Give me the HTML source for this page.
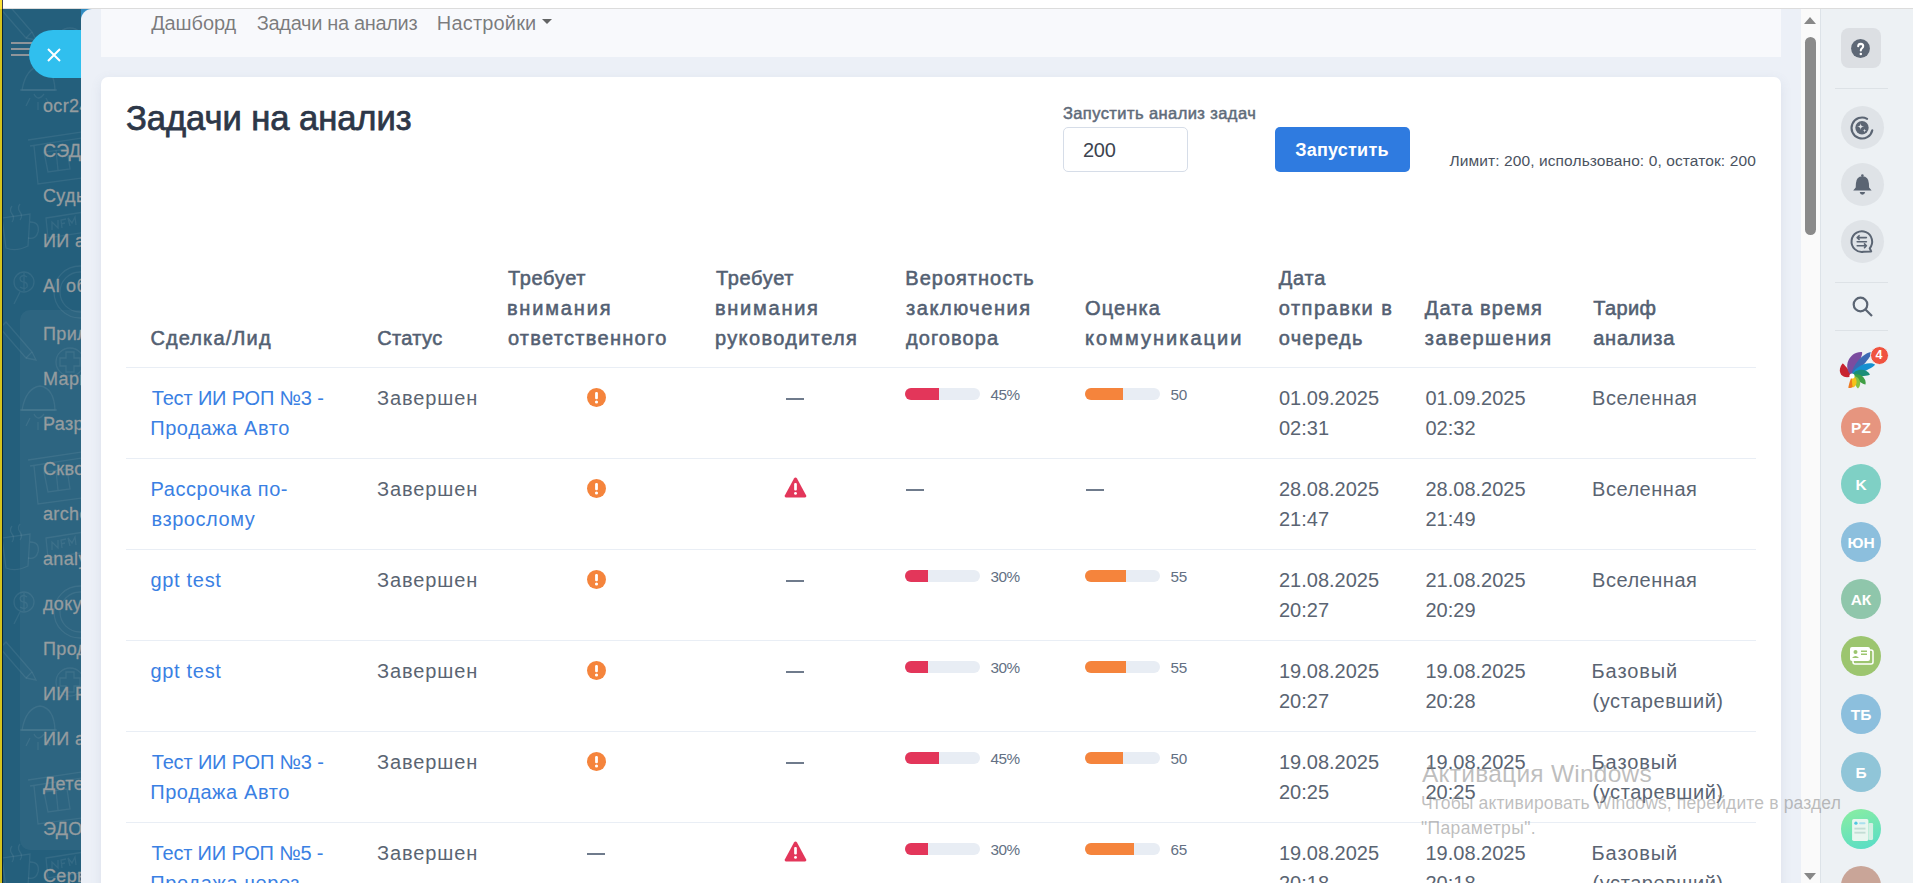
<!DOCTYPE html>
    <html><head><meta charset="utf-8"><title>Задачи на анализ</title><style>
    html,body{margin:0;padding:0}
    body{width:1913px;height:883px;overflow:hidden;position:relative;background:#fff;font-family:"Liberation Sans", sans-serif}
    .t{position:absolute;white-space:nowrap}
    #topline{position:absolute;left:3px;top:8px;width:1910px;height:1px;background:#dcdcdc}
    #ystrip{position:absolute;left:0;top:0;width:2px;height:883px;background:linear-gradient(#fde236 0,#fde236 9px,#d4c31f 9px)}
    #ystrip2{position:absolute;left:2px;top:0;width:1px;height:883px;background:linear-gradient(#44444f 0,#44444f 9px,#0c2432 9px)}
    #side{position:absolute;left:3px;top:9px;width:78px;height:874px;background:#245f7c;overflow:hidden}
    #side .t{margin-left:-3px;margin-top:-9px}
    .pat{position:absolute;left:0;top:0}
    .sbox{position:absolute;left:17px;top:301px;width:100px;height:540px;background:rgba(255,255,255,0.045);border-radius:10px}
    .hb{position:absolute;left:8px;width:22px;height:2.2px;background:#8f959a;margin-top:-9px}
    #pill{position:absolute;left:25.5px;top:21px;width:90px;height:48px;border-radius:24px;background:#30bfee}
    #panel{position:absolute;left:81px;top:9px;width:1720px;height:874px;background:#ecf0f7;border-top-left-radius:11px;overflow:hidden}
    #panel .t, #panel > div[style]{margin-left:-81px;margin-top:-9px}
    #nav{position:absolute;left:20px;top:0;width:1680px;height:48px;background:#f8f9fc}
    #card{position:absolute;left:20px;top:68px;width:1680px;height:900px;background:#fff;border-radius:7px;box-shadow:0 3px 12px rgba(90,110,150,0.11)}
    #inp{position:absolute;left:1063px;top:127px;width:123px;height:43px;border:1px solid #d6dde8;border-radius:5px;background:#fff}
    #btn{position:absolute;left:1275px;top:127px;width:135px;height:45px;border-radius:5px;background:#2f7be0}
    .hl{position:absolute;left:126px;width:1630px;height:1px;background:#e9eef5}
    .ic{position:absolute}
    .dash{position:absolute;height:1.6px;background:#6f7b8c}
    .bar{position:absolute;width:75px;height:12px;border-radius:6px;background:#e8edf4;overflow:hidden}
    .bar div{height:12px}
    #sb{position:absolute;left:1801px;top:9px;width:19px;height:874px;background:#fafafa}
    .arr{position:absolute;left:3px;width:0;height:0;border-left:6.6px solid transparent;border-right:6.6px solid transparent}
    .up{top:8px;border-bottom:7px solid #888}
    .dn{top:864px;border-top:7.2px solid #888}
    .thumb{position:absolute;left:4px;top:28px;width:11px;height:198px;border-radius:5.5px;background:#8a8a8a}
    #rb{position:absolute;left:1820px;top:9px;width:93px;height:874px;background:#edf1f4;border-left:1px solid #dde3e8;box-sizing:border-box;overflow:hidden}
    #rb > *{margin-top:-9px}
    .qbox{position:absolute;left:20px;top:28px;width:40px;height:40px;border-radius:8px;background:#dcdfe3}
    .rdiv{position:absolute;left:14px;width:53px;height:1px;background:#dde2e6}
    .rc{position:absolute;left:19.5px;width:43px;height:43px;border-radius:50%;background:#dfe3e7}
    .av{position:absolute;left:20px;width:40px;height:40px;border-radius:50%;color:#fff;font-weight:700;font-size:15.5px;line-height:42px;text-align:center}
    .badge{position:absolute;left:48.5px;top:336.9px;width:17px;height:17px;border-radius:50%;background:#f0533f;color:#fff;font-weight:700;font-size:12.5px;line-height:17px;text-align:center;border:1.5px solid #edf1f4;box-sizing:content-box;margin:0 !important}
    </style></head>
    <body>
    <div id="topline"></div><div id="ystrip"></div><div id="ystrip2"></div>
    <div id="side"><div class="sbox"></div><svg class="pat" style="left:-3px;top:-9px" width="84" height="883" viewBox="0 0 84 883" fill="none" stroke="rgba(255,255,255,0.075)" stroke-width="1.3"><g transform="translate(0,-260)"><g><path d="M22 30 Q26 8 40 6 Q54 8 55 30 Z"/><path d="M20 30 L57 30"/><path d="M34 34 Q38 42 44 34"/><path d="M30 38 L26 46 M38 42 L38 50 M46 38 L50 46"/><path d="M28 80 L82 72 M30 86 L82 78"/><path d="M34 86 L38 124 L82 118"/><path d="M44 92 L48 112 L70 109 L67 89 Z"/><path d="M56 90 L58 110"/><path d="M2 158 L30 154 L28 186 Q16 192 6 188 Z"/><path d="M30 162 Q40 162 38 172 Q36 180 28 178"/><path d="M12 146 q-3 4 0 8 q3 4 0 8 M20 144 q-3 4 0 8 q3 4 0 8"/><path d="M46 158 L84 152 L86 172 L48 178 Z"/><path d="M52 170 L52 162 L58 168 L58 160 M62 168 L61 160 L66 159 M61 164 L65 163 M70 166 L68 158 L72 163 L75 157 L76 165"/><circle cx="24" cy="222" r="10"/><path d="M20 232 L14 244"/><path d="M27 217 Q22 214 20 218 Q20 222 24 222 Q28 223 27 227 Q25 230 20 227 M24 213 L24 231"/><circle cx="80" cy="232" r="26"/><circle cx="80" cy="232" r="20"/><path d="M6 262 L32 292 L26 298 L0 268 Z"/><path d="M32 292 L36 300 L26 298"/><circle cx="70" cy="302" r="14"/><path d="M66 292 L74 292 L74 298 L80 298 L80 306 L74 306 L74 312 L66 312 L66 306 L60 306 L60 298 L66 298 Z"/></g></g><g transform="translate(0,60)"><g><path d="M22 30 Q26 8 40 6 Q54 8 55 30 Z"/><path d="M20 30 L57 30"/><path d="M34 34 Q38 42 44 34"/><path d="M30 38 L26 46 M38 42 L38 50 M46 38 L50 46"/><path d="M28 80 L82 72 M30 86 L82 78"/><path d="M34 86 L38 124 L82 118"/><path d="M44 92 L48 112 L70 109 L67 89 Z"/><path d="M56 90 L58 110"/><path d="M2 158 L30 154 L28 186 Q16 192 6 188 Z"/><path d="M30 162 Q40 162 38 172 Q36 180 28 178"/><path d="M12 146 q-3 4 0 8 q3 4 0 8 M20 144 q-3 4 0 8 q3 4 0 8"/><path d="M46 158 L84 152 L86 172 L48 178 Z"/><path d="M52 170 L52 162 L58 168 L58 160 M62 168 L61 160 L66 159 M61 164 L65 163 M70 166 L68 158 L72 163 L75 157 L76 165"/><circle cx="24" cy="222" r="10"/><path d="M20 232 L14 244"/><path d="M27 217 Q22 214 20 218 Q20 222 24 222 Q28 223 27 227 Q25 230 20 227 M24 213 L24 231"/><circle cx="80" cy="232" r="26"/><circle cx="80" cy="232" r="20"/><path d="M6 262 L32 292 L26 298 L0 268 Z"/><path d="M32 292 L36 300 L26 298"/><circle cx="70" cy="302" r="14"/><path d="M66 292 L74 292 L74 298 L80 298 L80 306 L74 306 L74 312 L66 312 L66 306 L60 306 L60 298 L66 298 Z"/></g></g><g transform="translate(0,380)"><g><path d="M22 30 Q26 8 40 6 Q54 8 55 30 Z"/><path d="M20 30 L57 30"/><path d="M34 34 Q38 42 44 34"/><path d="M30 38 L26 46 M38 42 L38 50 M46 38 L50 46"/><path d="M28 80 L82 72 M30 86 L82 78"/><path d="M34 86 L38 124 L82 118"/><path d="M44 92 L48 112 L70 109 L67 89 Z"/><path d="M56 90 L58 110"/><path d="M2 158 L30 154 L28 186 Q16 192 6 188 Z"/><path d="M30 162 Q40 162 38 172 Q36 180 28 178"/><path d="M12 146 q-3 4 0 8 q3 4 0 8 M20 144 q-3 4 0 8 q3 4 0 8"/><path d="M46 158 L84 152 L86 172 L48 178 Z"/><path d="M52 170 L52 162 L58 168 L58 160 M62 168 L61 160 L66 159 M61 164 L65 163 M70 166 L68 158 L72 163 L75 157 L76 165"/><circle cx="24" cy="222" r="10"/><path d="M20 232 L14 244"/><path d="M27 217 Q22 214 20 218 Q20 222 24 222 Q28 223 27 227 Q25 230 20 227 M24 213 L24 231"/><circle cx="80" cy="232" r="26"/><circle cx="80" cy="232" r="20"/><path d="M6 262 L32 292 L26 298 L0 268 Z"/><path d="M32 292 L36 300 L26 298"/><circle cx="70" cy="302" r="14"/><path d="M66 292 L74 292 L74 298 L80 298 L80 306 L74 306 L74 312 L66 312 L66 306 L60 306 L60 298 L66 298 Z"/></g></g><g transform="translate(0,700)"><g><path d="M22 30 Q26 8 40 6 Q54 8 55 30 Z"/><path d="M20 30 L57 30"/><path d="M34 34 Q38 42 44 34"/><path d="M30 38 L26 46 M38 42 L38 50 M46 38 L50 46"/><path d="M28 80 L82 72 M30 86 L82 78"/><path d="M34 86 L38 124 L82 118"/><path d="M44 92 L48 112 L70 109 L67 89 Z"/><path d="M56 90 L58 110"/><path d="M2 158 L30 154 L28 186 Q16 192 6 188 Z"/><path d="M30 162 Q40 162 38 172 Q36 180 28 178"/><path d="M12 146 q-3 4 0 8 q3 4 0 8 M20 144 q-3 4 0 8 q3 4 0 8"/><path d="M46 158 L84 152 L86 172 L48 178 Z"/><path d="M52 170 L52 162 L58 168 L58 160 M62 168 L61 160 L66 159 M61 164 L65 163 M70 166 L68 158 L72 163 L75 157 L76 165"/><circle cx="24" cy="222" r="10"/><path d="M20 232 L14 244"/><path d="M27 217 Q22 214 20 218 Q20 222 24 222 Q28 223 27 227 Q25 230 20 227 M24 213 L24 231"/><circle cx="80" cy="232" r="26"/><circle cx="80" cy="232" r="20"/><path d="M6 262 L32 292 L26 298 L0 268 Z"/><path d="M32 292 L36 300 L26 298"/><circle cx="70" cy="302" r="14"/><path d="M66 292 L74 292 L74 298 L80 298 L80 306 L74 306 L74 312 L66 312 L66 306 L60 306 L60 298 L66 298 Z"/></g></g></svg><div class="hb" style="top:42px"></div><div class="hb" style="top:48px"></div><div class="hb" style="top:54px"></div><div class="t" style="left:43.00px;top:97.36px;font-size:18px;line-height:18px;color:#959c9f;font-weight:400;letter-spacing:0.350px;-webkit-text-stroke:0.3px #959c9f;">ocr24</div><div class="t" style="left:43.00px;top:142.16px;font-size:18px;line-height:18px;color:#959c9f;font-weight:400;letter-spacing:0.350px;-webkit-text-stroke:0.3px #959c9f;">СЭД</div><div class="t" style="left:43.00px;top:186.76px;font-size:18px;line-height:18px;color:#959c9f;font-weight:400;letter-spacing:0.350px;-webkit-text-stroke:0.3px #959c9f;">Судьи</div><div class="t" style="left:43.00px;top:232.36px;font-size:18px;line-height:18px;color:#959c9f;font-weight:400;letter-spacing:0.350px;-webkit-text-stroke:0.3px #959c9f;">ИИ ана</div><div class="t" style="left:43.00px;top:277.16px;font-size:18px;line-height:18px;color:#959c9f;font-weight:400;letter-spacing:0.350px;-webkit-text-stroke:0.3px #959c9f;">AI обз</div><div class="t" style="left:43.00px;top:324.76px;font-size:18px;line-height:18px;color:#959c9f;font-weight:400;letter-spacing:0.350px;-webkit-text-stroke:0.3px #959c9f;">Прил</div><div class="t" style="left:43.00px;top:369.76px;font-size:18px;line-height:18px;color:#959c9f;font-weight:400;letter-spacing:0.350px;-webkit-text-stroke:0.3px #959c9f;">Марк</div><div class="t" style="left:43.00px;top:414.76px;font-size:18px;line-height:18px;color:#959c9f;font-weight:400;letter-spacing:0.350px;-webkit-text-stroke:0.3px #959c9f;">Разраб</div><div class="t" style="left:43.00px;top:459.76px;font-size:18px;line-height:18px;color:#959c9f;font-weight:400;letter-spacing:0.350px;-webkit-text-stroke:0.3px #959c9f;">Сквоз</div><div class="t" style="left:43.00px;top:504.76px;font-size:18px;line-height:18px;color:#959c9f;font-weight:400;letter-spacing:0.350px;-webkit-text-stroke:0.3px #959c9f;">archer</div><div class="t" style="left:43.00px;top:549.76px;font-size:18px;line-height:18px;color:#959c9f;font-weight:400;letter-spacing:0.350px;-webkit-text-stroke:0.3px #959c9f;">analyt</div><div class="t" style="left:43.00px;top:594.76px;font-size:18px;line-height:18px;color:#959c9f;font-weight:400;letter-spacing:0.350px;-webkit-text-stroke:0.3px #959c9f;">докум</div><div class="t" style="left:43.00px;top:639.76px;font-size:18px;line-height:18px;color:#959c9f;font-weight:400;letter-spacing:0.350px;-webkit-text-stroke:0.3px #959c9f;">Прод</div><div class="t" style="left:43.00px;top:684.76px;font-size:18px;line-height:18px;color:#959c9f;font-weight:400;letter-spacing:0.350px;-webkit-text-stroke:0.3px #959c9f;">ИИ РО</div><div class="t" style="left:43.00px;top:729.76px;font-size:18px;line-height:18px;color:#959c9f;font-weight:400;letter-spacing:0.350px;-webkit-text-stroke:0.3px #959c9f;">ИИ ана</div><div class="t" style="left:43.00px;top:774.76px;font-size:18px;line-height:18px;color:#959c9f;font-weight:400;letter-spacing:0.350px;-webkit-text-stroke:0.3px #959c9f;">Детек</div><div class="t" style="left:43.00px;top:819.76px;font-size:18px;line-height:18px;color:#959c9f;font-weight:400;letter-spacing:0.350px;-webkit-text-stroke:0.3px #959c9f;">ЭДО</div><div class="t" style="left:43.00px;top:867.26px;font-size:18px;line-height:18px;color:#959c9f;font-weight:400;letter-spacing:0.350px;-webkit-text-stroke:0.3px #959c9f;">Серви</div><div id="pill"><svg width="14" height="14" viewBox="0 0 14 14" style="position:absolute;left:18.5px;top:17.5px"><path d="M1 1 L13 13 M13 1 L1 13" stroke="#fff" stroke-width="2"/></svg></div></div><div style="position:absolute;left:81px;top:9px;width:14px;height:14px;background:linear-gradient(135deg,#2e86bd,#46a9d9)"></div><div id="panel"><div id="nav"></div><div class="t" style="left:151.20px;top:13.07px;font-size:20px;line-height:20px;color:rgba(0,0,0,0.52);font-weight:400;letter-spacing:-0.117px;">Дашборд</div><div class="t" style="left:256.80px;top:13.07px;font-size:20px;line-height:20px;color:rgba(0,0,0,0.52);font-weight:400;letter-spacing:-0.327px;">Задачи на анализ</div><div class="t" style="left:436.80px;top:13.07px;font-size:20px;line-height:20px;color:rgba(0,0,0,0.52);font-weight:400;letter-spacing:0.175px;">Настройки</div><div style="position:absolute;left:541.5px;top:19px;width:0;height:0;border-left:5.8px solid transparent;border-right:5.8px solid transparent;border-top:5.8px solid rgba(0,0,0,0.6)"></div><div id="card"></div></div><div class="t" style="left:126.00px;top:101.46px;font-size:34.6px;line-height:34.6px;color:#2d3748;font-weight:400;letter-spacing:-0.067px;-webkit-text-stroke:0.75px #2d3748;">Задачи на анализ</div><div class="t" style="left:1062.90px;top:105.43px;font-size:16.5px;line-height:16.5px;color:#5f6b7a;font-weight:400;letter-spacing:0.414px;-webkit-text-stroke:0.5px #5f6b7a;">Запустить анализ задач</div><div id="inp"></div><div class="t" style="left:1083.00px;top:140.17px;font-size:20px;line-height:20px;color:#3d4450;font-weight:400;letter-spacing:-0.250px;">200</div><div id="btn"></div><div class="t" style="left:1295.30px;top:141.26px;font-size:18px;line-height:18px;color:#ffffff;font-weight:700;letter-spacing:0.213px;">Запустить</div><div class="t" style="left:1449.40px;top:152.88px;font-size:15.5px;line-height:15.5px;color:#4a5260;font-weight:400;letter-spacing:0.105px;">Лимит: 200, использовано: 0, остаток: 200</div><div class="t" style="left:150.40px;top:327.57px;font-size:20px;line-height:20px;color:#536072;font-weight:400;letter-spacing:1.122px;-webkit-text-stroke:0.55px #536072;">Сделка/Лид</div><div class="t" style="left:377.20px;top:327.57px;font-size:20px;line-height:20px;color:#536072;font-weight:400;letter-spacing:0.360px;-webkit-text-stroke:0.55px #536072;">Статус</div><div class="t" style="left:507.90px;top:267.57px;font-size:20px;line-height:20px;color:#536072;font-weight:400;letter-spacing:0.683px;-webkit-text-stroke:0.55px #536072;">Требует</div><div class="t" style="left:506.90px;top:297.57px;font-size:20px;line-height:20px;color:#536072;font-weight:400;letter-spacing:1.843px;-webkit-text-stroke:0.55px #536072;">внимания</div><div class="t" style="left:507.90px;top:327.57px;font-size:20px;line-height:20px;color:#536072;font-weight:400;letter-spacing:1.300px;-webkit-text-stroke:0.55px #536072;">ответственного</div><div class="t" style="left:715.90px;top:267.57px;font-size:20px;line-height:20px;color:#536072;font-weight:400;letter-spacing:0.683px;-webkit-text-stroke:0.55px #536072;">Требует</div><div class="t" style="left:714.90px;top:297.57px;font-size:20px;line-height:20px;color:#536072;font-weight:400;letter-spacing:1.757px;-webkit-text-stroke:0.55px #536072;">внимания</div><div class="t" style="left:714.90px;top:327.57px;font-size:20px;line-height:20px;color:#536072;font-weight:400;letter-spacing:1.382px;-webkit-text-stroke:0.55px #536072;">руководителя</div><div class="t" style="left:905.30px;top:267.57px;font-size:20px;line-height:20px;color:#536072;font-weight:400;letter-spacing:1.000px;-webkit-text-stroke:0.55px #536072;">Вероятность</div><div class="t" style="left:906.00px;top:297.57px;font-size:20px;line-height:20px;color:#536072;font-weight:400;letter-spacing:1.556px;-webkit-text-stroke:0.55px #536072;">заключения</div><div class="t" style="left:906.00px;top:327.57px;font-size:20px;line-height:20px;color:#536072;font-weight:400;letter-spacing:1.071px;-webkit-text-stroke:0.55px #536072;">договора</div><div class="t" style="left:1085.00px;top:297.57px;font-size:20px;line-height:20px;color:#536072;font-weight:400;letter-spacing:1.140px;-webkit-text-stroke:0.55px #536072;">Оценка</div><div class="t" style="left:1085.00px;top:327.57px;font-size:20px;line-height:20px;color:#536072;font-weight:400;letter-spacing:2.027px;-webkit-text-stroke:0.55px #536072;">коммуникации</div><div class="t" style="left:1278.80px;top:267.57px;font-size:20px;line-height:20px;color:#536072;font-weight:400;letter-spacing:0.733px;-webkit-text-stroke:0.55px #536072;">Дата</div><div class="t" style="left:1278.80px;top:297.57px;font-size:20px;line-height:20px;color:#536072;font-weight:400;letter-spacing:1.489px;-webkit-text-stroke:0.55px #536072;">отправки в</div><div class="t" style="left:1278.80px;top:327.57px;font-size:20px;line-height:20px;color:#536072;font-weight:400;letter-spacing:1.233px;-webkit-text-stroke:0.55px #536072;">очередь</div><div class="t" style="left:1424.80px;top:297.57px;font-size:20px;line-height:20px;color:#536072;font-weight:400;letter-spacing:1.078px;-webkit-text-stroke:0.55px #536072;">Дата время</div><div class="t" style="left:1424.80px;top:327.57px;font-size:20px;line-height:20px;color:#536072;font-weight:400;letter-spacing:1.467px;-webkit-text-stroke:0.55px #536072;">завершения</div><div class="t" style="left:1593.20px;top:297.57px;font-size:20px;line-height:20px;color:#536072;font-weight:400;letter-spacing:0.375px;-webkit-text-stroke:0.55px #536072;">Тариф</div><div class="t" style="left:1593.20px;top:327.57px;font-size:20px;line-height:20px;color:#536072;font-weight:400;letter-spacing:0.800px;-webkit-text-stroke:0.55px #536072;">анализа</div><div class="hl" style="top:367px"></div><div class="t" style="left:151.70px;top:387.77px;font-size:20px;line-height:20px;color:#3a80e3;font-weight:400;letter-spacing:-0.147px;">Тест ИИ РОП №3 -</div><div class="t" style="left:150.20px;top:417.77px;font-size:20px;line-height:20px;color:#3a80e3;font-weight:400;letter-spacing:0.591px;">Продажа Авто</div><div class="t" style="left:377.00px;top:387.77px;font-size:20px;line-height:20px;color:#5a6472;font-weight:400;letter-spacing:0.900px;">Завершен</div><svg class="ic" style="left:586.5px;top:387.5px" width="19" height="19" viewBox="0 0 19 19"><circle cx="9.5" cy="9.5" r="9.5" fill="#f5843c"/><rect x="8.1" y="4" width="2.8" height="7.2" rx="1.2" fill="#fff"/><circle cx="9.5" cy="14" r="1.55" fill="#fff"/></svg><div class="dash" style="left:786px;top:398.25px;width:18px"></div><div class="bar" style="left:905px;top:387.8px"><div style="width:33.8px;background:#e3365a"></div></div><div class="t" style="left:990.50px;top:387.15px;font-size:15.3px;line-height:15.3px;color:#637083;font-weight:400;letter-spacing:-0.450px;">45%</div><div class="bar" style="left:1085px;top:387.8px"><div style="width:37.5px;background:#f5843c"></div></div><div class="t" style="left:1170.50px;top:387.15px;font-size:15.3px;line-height:15.3px;color:#637083;font-weight:400;letter-spacing:-0.200px;">50</div><div class="t" style="left:1279.00px;top:387.77px;font-size:20px;line-height:20px;color:#5a6472;font-weight:400;letter-spacing:0.000px;">01.09.2025</div><div class="t" style="left:1279.00px;top:417.77px;font-size:20px;line-height:20px;color:#5a6472;font-weight:400;letter-spacing:0.000px;">02:31</div><div class="t" style="left:1425.50px;top:387.77px;font-size:20px;line-height:20px;color:#5a6472;font-weight:400;letter-spacing:0.000px;">01.09.2025</div><div class="t" style="left:1425.50px;top:417.77px;font-size:20px;line-height:20px;color:#5a6472;font-weight:400;letter-spacing:0.000px;">02:32</div><div class="t" style="left:1592.00px;top:387.77px;font-size:20px;line-height:20px;color:#5a6472;font-weight:400;letter-spacing:0.537px;">Вселенная</div><div class="hl" style="top:458px"></div><div class="t" style="left:150.50px;top:478.77px;font-size:20px;line-height:20px;color:#3a80e3;font-weight:400;letter-spacing:0.542px;">Рассрочка по-</div><div class="t" style="left:151.50px;top:508.77px;font-size:20px;line-height:20px;color:#3a80e3;font-weight:400;letter-spacing:0.550px;">взрослому</div><div class="t" style="left:377.00px;top:478.77px;font-size:20px;line-height:20px;color:#5a6472;font-weight:400;letter-spacing:0.900px;">Завершен</div><svg class="ic" style="left:586.5px;top:478.5px" width="19" height="19" viewBox="0 0 19 19"><circle cx="9.5" cy="9.5" r="9.5" fill="#f5843c"/><rect x="8.1" y="4" width="2.8" height="7.2" rx="1.2" fill="#fff"/><circle cx="9.5" cy="14" r="1.55" fill="#fff"/></svg><svg class="ic" style="left:783.9px;top:477.0px" width="23" height="21" viewBox="0 0 23 21"><path d="M11.5 0.6 Q12.4 0.6 13 1.6 L22.2 18.4 Q22.8 20.4 20.9 20.4 L2.1 20.4 Q0.2 20.4 0.8 18.4 L10 1.6 Q10.6 0.6 11.5 0.6 Z" fill="#e3365a"/><rect x="10.15" y="6" width="2.7" height="7.6" rx="1.1" fill="#fff"/><circle cx="11.5" cy="16.4" r="1.45" fill="#fff"/></svg><div class="dash" style="left:906.3px;top:489.25px;width:18px"></div><div class="dash" style="left:1086px;top:489.25px;width:18px"></div><div class="t" style="left:1279.00px;top:478.77px;font-size:20px;line-height:20px;color:#5a6472;font-weight:400;letter-spacing:0.000px;">28.08.2025</div><div class="t" style="left:1279.00px;top:508.77px;font-size:20px;line-height:20px;color:#5a6472;font-weight:400;letter-spacing:0.000px;">21:47</div><div class="t" style="left:1425.50px;top:478.77px;font-size:20px;line-height:20px;color:#5a6472;font-weight:400;letter-spacing:0.000px;">28.08.2025</div><div class="t" style="left:1425.50px;top:508.77px;font-size:20px;line-height:20px;color:#5a6472;font-weight:400;letter-spacing:0.000px;">21:49</div><div class="t" style="left:1592.00px;top:478.77px;font-size:20px;line-height:20px;color:#5a6472;font-weight:400;letter-spacing:0.537px;">Вселенная</div><div class="hl" style="top:549px"></div><div class="t" style="left:150.50px;top:569.77px;font-size:20px;line-height:20px;color:#3a80e3;font-weight:400;letter-spacing:0.686px;">gpt test</div><div class="t" style="left:377.00px;top:569.77px;font-size:20px;line-height:20px;color:#5a6472;font-weight:400;letter-spacing:0.900px;">Завершен</div><svg class="ic" style="left:586.5px;top:569.5px" width="19" height="19" viewBox="0 0 19 19"><circle cx="9.5" cy="9.5" r="9.5" fill="#f5843c"/><rect x="8.1" y="4" width="2.8" height="7.2" rx="1.2" fill="#fff"/><circle cx="9.5" cy="14" r="1.55" fill="#fff"/></svg><div class="dash" style="left:786px;top:580.25px;width:18px"></div><div class="bar" style="left:905px;top:569.8px"><div style="width:22.5px;background:#e3365a"></div></div><div class="t" style="left:990.50px;top:569.15px;font-size:15.3px;line-height:15.3px;color:#637083;font-weight:400;letter-spacing:-0.450px;">30%</div><div class="bar" style="left:1085px;top:569.8px"><div style="width:41.2px;background:#f5843c"></div></div><div class="t" style="left:1170.50px;top:569.15px;font-size:15.3px;line-height:15.3px;color:#637083;font-weight:400;letter-spacing:-0.200px;">55</div><div class="t" style="left:1279.00px;top:569.77px;font-size:20px;line-height:20px;color:#5a6472;font-weight:400;letter-spacing:0.000px;">21.08.2025</div><div class="t" style="left:1279.00px;top:599.77px;font-size:20px;line-height:20px;color:#5a6472;font-weight:400;letter-spacing:0.000px;">20:27</div><div class="t" style="left:1425.50px;top:569.77px;font-size:20px;line-height:20px;color:#5a6472;font-weight:400;letter-spacing:0.000px;">21.08.2025</div><div class="t" style="left:1425.50px;top:599.77px;font-size:20px;line-height:20px;color:#5a6472;font-weight:400;letter-spacing:0.000px;">20:29</div><div class="t" style="left:1592.00px;top:569.77px;font-size:20px;line-height:20px;color:#5a6472;font-weight:400;letter-spacing:0.537px;">Вселенная</div><div class="hl" style="top:640px"></div><div class="t" style="left:150.50px;top:660.77px;font-size:20px;line-height:20px;color:#3a80e3;font-weight:400;letter-spacing:0.686px;">gpt test</div><div class="t" style="left:377.00px;top:660.77px;font-size:20px;line-height:20px;color:#5a6472;font-weight:400;letter-spacing:0.900px;">Завершен</div><svg class="ic" style="left:586.5px;top:660.5px" width="19" height="19" viewBox="0 0 19 19"><circle cx="9.5" cy="9.5" r="9.5" fill="#f5843c"/><rect x="8.1" y="4" width="2.8" height="7.2" rx="1.2" fill="#fff"/><circle cx="9.5" cy="14" r="1.55" fill="#fff"/></svg><div class="dash" style="left:786px;top:671.25px;width:18px"></div><div class="bar" style="left:905px;top:660.8px"><div style="width:22.5px;background:#e3365a"></div></div><div class="t" style="left:990.50px;top:660.15px;font-size:15.3px;line-height:15.3px;color:#637083;font-weight:400;letter-spacing:-0.450px;">30%</div><div class="bar" style="left:1085px;top:660.8px"><div style="width:41.2px;background:#f5843c"></div></div><div class="t" style="left:1170.50px;top:660.15px;font-size:15.3px;line-height:15.3px;color:#637083;font-weight:400;letter-spacing:-0.200px;">55</div><div class="t" style="left:1279.00px;top:660.77px;font-size:20px;line-height:20px;color:#5a6472;font-weight:400;letter-spacing:0.000px;">19.08.2025</div><div class="t" style="left:1279.00px;top:690.77px;font-size:20px;line-height:20px;color:#5a6472;font-weight:400;letter-spacing:0.000px;">20:27</div><div class="t" style="left:1425.50px;top:660.77px;font-size:20px;line-height:20px;color:#5a6472;font-weight:400;letter-spacing:0.000px;">19.08.2025</div><div class="t" style="left:1425.50px;top:690.77px;font-size:20px;line-height:20px;color:#5a6472;font-weight:400;letter-spacing:0.000px;">20:28</div><div class="t" style="left:1591.60px;top:660.77px;font-size:20px;line-height:20px;color:#5a6472;font-weight:400;letter-spacing:0.900px;">Базовый</div><div class="t" style="left:1592.60px;top:690.77px;font-size:20px;line-height:20px;color:#5a6472;font-weight:400;letter-spacing:0.545px;">(устаревший)</div><div class="hl" style="top:731px"></div><div class="t" style="left:151.70px;top:751.77px;font-size:20px;line-height:20px;color:#3a80e3;font-weight:400;letter-spacing:-0.147px;">Тест ИИ РОП №3 -</div><div class="t" style="left:150.20px;top:781.77px;font-size:20px;line-height:20px;color:#3a80e3;font-weight:400;letter-spacing:0.591px;">Продажа Авто</div><div class="t" style="left:377.00px;top:751.77px;font-size:20px;line-height:20px;color:#5a6472;font-weight:400;letter-spacing:0.900px;">Завершен</div><svg class="ic" style="left:586.5px;top:751.5px" width="19" height="19" viewBox="0 0 19 19"><circle cx="9.5" cy="9.5" r="9.5" fill="#f5843c"/><rect x="8.1" y="4" width="2.8" height="7.2" rx="1.2" fill="#fff"/><circle cx="9.5" cy="14" r="1.55" fill="#fff"/></svg><div class="dash" style="left:786px;top:762.25px;width:18px"></div><div class="bar" style="left:905px;top:751.8px"><div style="width:33.8px;background:#e3365a"></div></div><div class="t" style="left:990.50px;top:751.15px;font-size:15.3px;line-height:15.3px;color:#637083;font-weight:400;letter-spacing:-0.450px;">45%</div><div class="bar" style="left:1085px;top:751.8px"><div style="width:37.5px;background:#f5843c"></div></div><div class="t" style="left:1170.50px;top:751.15px;font-size:15.3px;line-height:15.3px;color:#637083;font-weight:400;letter-spacing:-0.200px;">50</div><div class="t" style="left:1279.00px;top:751.77px;font-size:20px;line-height:20px;color:#5a6472;font-weight:400;letter-spacing:0.000px;">19.08.2025</div><div class="t" style="left:1279.00px;top:781.77px;font-size:20px;line-height:20px;color:#5a6472;font-weight:400;letter-spacing:0.000px;">20:25</div><div class="t" style="left:1425.50px;top:751.77px;font-size:20px;line-height:20px;color:#5a6472;font-weight:400;letter-spacing:0.000px;">19.08.2025</div><div class="t" style="left:1425.50px;top:781.77px;font-size:20px;line-height:20px;color:#5a6472;font-weight:400;letter-spacing:0.000px;">20:25</div><div class="t" style="left:1591.60px;top:751.77px;font-size:20px;line-height:20px;color:#5a6472;font-weight:400;letter-spacing:0.900px;">Базовый</div><div class="t" style="left:1592.60px;top:781.77px;font-size:20px;line-height:20px;color:#5a6472;font-weight:400;letter-spacing:0.545px;">(устаревший)</div><div class="hl" style="top:822px"></div><div class="t" style="left:151.50px;top:842.77px;font-size:20px;line-height:20px;color:#3a80e3;font-weight:400;letter-spacing:-0.167px;">Тест ИИ РОП №5 -</div><div class="t" style="left:150.20px;top:872.77px;font-size:20px;line-height:20px;color:#3a80e3;font-weight:400;letter-spacing:0.650px;">Продажа через</div><div class="t" style="left:377.00px;top:842.77px;font-size:20px;line-height:20px;color:#5a6472;font-weight:400;letter-spacing:0.900px;">Завершен</div><div class="dash" style="left:587px;top:853.25px;width:18px"></div><svg class="ic" style="left:783.9px;top:841.0px" width="23" height="21" viewBox="0 0 23 21"><path d="M11.5 0.6 Q12.4 0.6 13 1.6 L22.2 18.4 Q22.8 20.4 20.9 20.4 L2.1 20.4 Q0.2 20.4 0.8 18.4 L10 1.6 Q10.6 0.6 11.5 0.6 Z" fill="#e3365a"/><rect x="10.15" y="6" width="2.7" height="7.6" rx="1.1" fill="#fff"/><circle cx="11.5" cy="16.4" r="1.45" fill="#fff"/></svg><div class="bar" style="left:905px;top:842.8px"><div style="width:22.5px;background:#e3365a"></div></div><div class="t" style="left:990.50px;top:842.15px;font-size:15.3px;line-height:15.3px;color:#637083;font-weight:400;letter-spacing:-0.450px;">30%</div><div class="bar" style="left:1085px;top:842.8px"><div style="width:48.8px;background:#f5843c"></div></div><div class="t" style="left:1170.50px;top:842.15px;font-size:15.3px;line-height:15.3px;color:#637083;font-weight:400;letter-spacing:-0.200px;">65</div><div class="t" style="left:1279.00px;top:842.77px;font-size:20px;line-height:20px;color:#5a6472;font-weight:400;letter-spacing:0.000px;">19.08.2025</div><div class="t" style="left:1279.00px;top:872.77px;font-size:20px;line-height:20px;color:#5a6472;font-weight:400;letter-spacing:0.000px;">20:18</div><div class="t" style="left:1425.50px;top:842.77px;font-size:20px;line-height:20px;color:#5a6472;font-weight:400;letter-spacing:0.000px;">19.08.2025</div><div class="t" style="left:1425.50px;top:872.77px;font-size:20px;line-height:20px;color:#5a6472;font-weight:400;letter-spacing:0.000px;">20:18</div><div class="t" style="left:1591.60px;top:842.77px;font-size:20px;line-height:20px;color:#5a6472;font-weight:400;letter-spacing:0.900px;">Базовый</div><div class="t" style="left:1592.60px;top:872.77px;font-size:20px;line-height:20px;color:#5a6472;font-weight:400;letter-spacing:0.545px;">(устаревший)</div><div id="sb"><div class="arr up"></div><div class="thumb"></div><div class="arr dn"></div></div><div id="rb"><div class="qbox"><svg width="19" height="19" viewBox="0 0 19 19" style="position:absolute;left:10.4px;top:10.8px"><circle cx="9.5" cy="9.5" r="9.4" fill="#5e6876"/>
    <path d="M7.2 7.3 Q7.3 4.9 9.7 4.9 Q12.2 5 12.2 7.1 Q12.2 8.5 10.9 9.3 Q9.8 10 9.8 11.5" fill="none" stroke="#fff" stroke-width="2.1" stroke-linecap="round"/><circle cx="9.8" cy="15" r="1.25" fill="#fff"/></svg></div><div class="rdiv" style="top:88px"></div><div class="rc" style="top:106px"><svg width="43" height="43" viewBox="0 0 43 43" style="position:absolute;left:0;top:0"><path d="M26.1 12.8 A10.5 10.5 0 1 0 31.3 24.2" fill="none" stroke="#5b6573" stroke-width="2.1" stroke-linecap="round"/><circle cx="21" cy="21.8" r="6.7" fill="#5b6573"/><path d="M19.6 17.0 Q19.6 20.6 23.200000000000003 20.6 Q19.6 20.6 19.6 24.200000000000003 Q19.6 20.6 16.0 20.6 Q19.6 20.6 19.6 17.0Z" fill="#dfe3e7"/><path d="M23.6 22.700000000000003 Q23.6 24.6 25.5 24.6 Q23.6 24.6 23.6 26.5 Q23.6 24.6 21.700000000000003 24.6 Q23.6 24.6 23.6 22.700000000000003Z" fill="#dfe3e7"/></svg></div><div class="rc" style="top:163px"><svg width="43" height="43" viewBox="0 0 43 43" style="position:absolute;left:0;top:0" fill="#5b6573"><circle cx="21.4" cy="12.6" r="1.3"/><path d="M21.4 13.3 Q27.6 13.6 27.9 20.5 L28.1 24.4 L30.6 27.6 L12.2 27.6 L14.7 24.4 L14.9 20.5 Q15.2 13.6 21.4 13.3Z"/><path d="M18.7 29 L24.1 29 Q23.7 31.7 21.4 31.7 Q19.1 31.7 18.7 29Z"/></svg></div><div class="rc" style="top:220px"><svg width="43" height="43" viewBox="0 0 43 43" style="position:absolute;left:0;top:0" fill="none" stroke="#5b6573" stroke-width="2" stroke-linejoin="round" stroke-linecap="round"><path d="M22.6 31.8 A10.3 10.3 0 1 1 28.7 28.3 L30.2 31.4 Z"/><path d="M16.2 17.6 L25.4 17.6 M18.1 15.7 L16.2 17.6 L18.1 19.5 M16.2 21.7 L25.4 21.7 M16.2 25.8 L25.4 25.8 M23.5 23.9 L25.4 25.8 L23.5 27.7" stroke-width="1.6"/></svg></div><div class="rdiv" style="top:282px"></div><svg style="position:absolute;left:31px;top:296px" width="22" height="22" viewBox="0 0 22 22" fill="none" stroke="#5b6573" stroke-width="2.2"><circle cx="8.5" cy="8.5" r="6.8"/><path d="M13.5 13.5 L20 20"/></svg><div class="rdiv" style="top:329.5px"></div><svg style="position:absolute;left:15.5px;top:348.5px" width="50" height="44" viewBox="-15 -27 50 44"><path d="M0 0 C7.03 4.00 4.08 12.26 -3.50 12.00 C-4.04 11.19 -1.94 3.99 0 0Z" fill="#ee7a1e"/><path d="M0 0 C-9.86 4.54 -15.95 -4.64 -9.50 -12.50 C-8.12 -12.56 -2.42 -5.06 0 0Z" fill="#c8232f"/><path d="M0 0 C-10.38 -8.55 -2.59 -25.02 10.00 -24.00 C11.23 -22.08 5.23 -7.68 0 0Z" fill="#7b4c9f"/><path d="M0 0 C-2.40 -8.10 11.96 -24.60 20.00 -24.00 C20.73 -21.36 8.73 -6.96 0 0Z" fill="#3c69b3"/><path d="M0 0 C0.09 -8.45 16.41 -16.05 23.00 -11.50 C22.68 -9.27 8.88 -2.37 0 0Z" fill="#1590d0"/><path d="M0 0 C2.06 -7.92 14.70 -8.46 18.00 -1.50 C17.21 -0.13 6.41 0.77 0 0Z" fill="#1c8e77"/><path d="M0 0 C5.85 -4.80 15.04 1.55 13.50 8.50 C12.21 9.05 4.11 3.95 0 0Z" fill="#3f9f45"/><path d="M0 0 C7.09 -1.10 10.88 7.85 6.00 12.50 C4.80 12.31 1.20 4.81 0 0Z" fill="#86c241"/><path d="M0 0 C5.84 1.23 6.16 9.31 1.00 11.50 C0.26 10.98 -0.34 4.08 0 0Z" fill="#f5c21a"/><circle cx="0" cy="0" r="2.6" fill="#fff"/></svg><div class="badge">4</div><div class="av" style="top:407px;background:#e6957f">PZ</div><div class="av" style="top:464px;background:#7fd0c5">K</div><div class="av" style="top:522px;background:#8cbfdd">ЮН</div><div class="av" style="top:579px;background:#8fc6ab">АК</div><div class="av" style="top:636px;background:#9cc56f"><svg width="26" height="22" viewBox="0 0 26 22" style="position:absolute;left:8px;top:9px"><rect x="4" y="5" width="20" height="14" rx="2" fill="none" stroke="#fff" stroke-width="1.5"/><rect x="1" y="2" width="20" height="14" rx="2" fill="#fff"/><circle cx="6.5" cy="7" r="2" fill="#9cc56f"/><path d="M3 13 Q6.5 9 10 13Z" fill="#9cc56f"/><rect x="12" y="5.5" width="6" height="1.5" fill="#9cc56f"/><rect x="12" y="8.5" width="6" height="1.5" fill="#9cc56f"/></svg></div><div class="av" style="top:694px;background:#8cbfdd">ТБ</div><div class="av" style="top:752px;background:#90c5d8">Б</div><div class="av" style="top:809px;background:linear-gradient(160deg,#8ceea0,#55dcc9)"><svg width="28" height="28" viewBox="0 0 24 24" style="position:absolute;left:6.5px;top:6.5px"><rect x="3.5" y="2.5" width="14" height="19" rx="1.5" fill="#e9f6f0"/><rect x="17.5" y="6" width="4" height="14.5" rx="1" fill="#d3efe3"/><circle cx="6.8" cy="6.2" r="1.4" fill="#52c7e0"/><rect x="9.5" y="5.4" width="5.5" height="1.6" rx="0.8" fill="#a9e0ee"/><rect x="5.5" y="10" width="9.5" height="1.6" fill="#c3ddd5"/><rect x="5.5" y="13.5" width="9.5" height="1.6" fill="#c3ddd5"/></svg></div><div class="av" style="top:866px;background:#c9a598"></div></div><div class="t" style="left:1422.00px;top:761.96px;font-size:24.5px;line-height:24.5px;color:rgba(125,125,125,0.5);font-weight:400;letter-spacing:0.250px;">Активация Windows</div><div class="t" style="left:1421.00px;top:795.49px;font-size:17.5px;line-height:17.5px;color:rgba(125,125,125,0.5);font-weight:400;letter-spacing:0.147px;">Чтобы активировать Windows, перейдите в раздел</div><div class="t" style="left:1421.00px;top:819.79px;font-size:17.5px;line-height:17.5px;color:rgba(125,125,125,0.5);font-weight:400;letter-spacing:0.364px;">"Параметры".</div>
    </body></html>
